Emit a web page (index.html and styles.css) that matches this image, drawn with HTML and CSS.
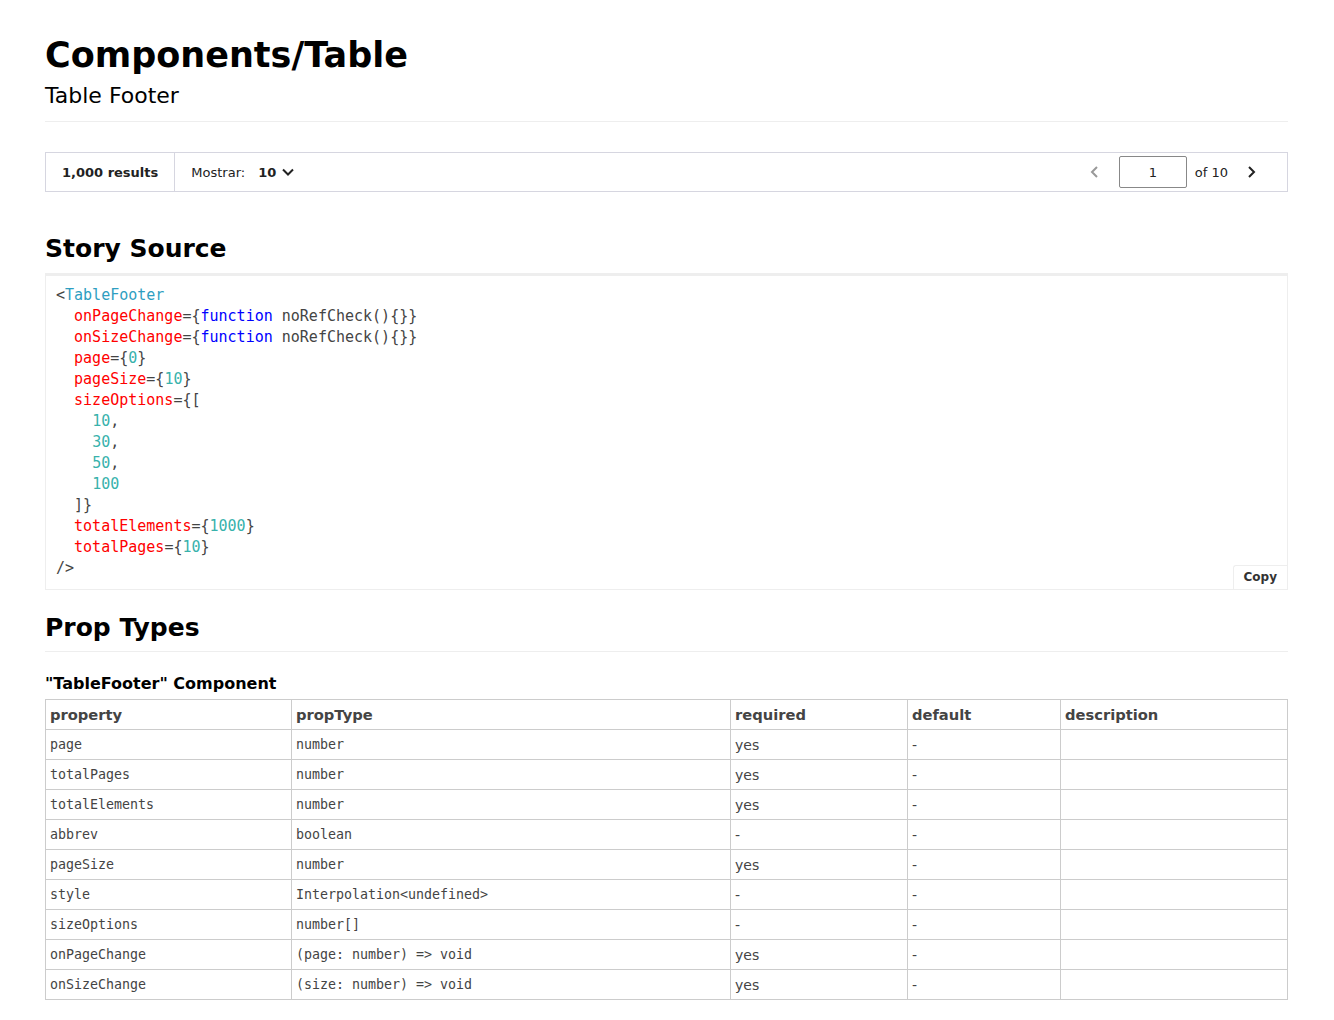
FILE: index.html
```html
<!DOCTYPE html>
<html>
<head>
<meta charset="utf-8">
<link rel="stylesheet" href="styles.css">
</head>
<body>
<div class="page">
  <header class="head">
    <h1 class="title">Components/Table</h1>
    <div class="subtitle">Table Footer</div>
  </header>

  <div class="footer-bar">
    <div class="results">1,000 results</div>
    <div class="size">
      <span class="size-label">Mostrar:</span>
      <span class="size-value">10</span>
      <svg class="chev-down" width="14" height="14" viewBox="0 0 14 14"><path d="M2 4.5 L7 9.5 L12 4.5" fill="none" stroke="#222" stroke-width="2"/></svg>
    </div>
    <div class="pager">
      <svg class="chev prev" width="14" height="14" viewBox="0 0 14 14"><path d="M9 2 L4 7 L9 12" fill="none" stroke="#999" stroke-width="2"/></svg>
      <div class="page-input">1</div>
      <span class="of">of 10</span>
      <svg class="chev next" width="14" height="14" viewBox="0 0 14 14"><path d="M5 2 L10 7 L5 12" fill="none" stroke="#222" stroke-width="2"/></svg>
    </div>
  </div>

  <h2 class="section">Story Source</h2>
  <div class="source">
<pre class="code"><span class="p">&lt;</span><span class="tag">TableFooter</span>
  <span class="attr">onPageChange</span><span class="p">={</span><span class="kw">function</span> <span class="p">noRefCheck(){}}</span>
  <span class="attr">onSizeChange</span><span class="p">={</span><span class="kw">function</span> <span class="p">noRefCheck(){}}</span>
  <span class="attr">page</span><span class="p">={</span><span class="num">0</span><span class="p">}</span>
  <span class="attr">pageSize</span><span class="p">={</span><span class="num">10</span><span class="p">}</span>
  <span class="attr">sizeOptions</span><span class="p">={[</span>
    <span class="num">10</span><span class="p">,</span>
    <span class="num">30</span><span class="p">,</span>
    <span class="num">50</span><span class="p">,</span>
    <span class="num">100</span>
  <span class="p">]}</span>
  <span class="attr">totalElements</span><span class="p">={</span><span class="num">1000</span><span class="p">}</span>
  <span class="attr">totalPages</span><span class="p">={</span><span class="num">10</span><span class="p">}</span>
<span class="p">/&gt;</span></pre>
    <button class="copy">Copy</button>
  </div>

  <h2 class="section section-rule">Prop Types</h2>
  <h3 class="comp">"TableFooter" Component</h3>
  <table class="props">
    <thead>
      <tr><th class="c1">property</th><th class="c2">propType</th><th class="c3">required</th><th class="c4">default</th><th class="c5">description</th></tr>
    </thead>
    <tbody>
      <tr><td class="mono">page</td><td class="mono">number</td><td>yes</td><td>-</td><td></td></tr>
      <tr><td class="mono">totalPages</td><td class="mono">number</td><td>yes</td><td>-</td><td></td></tr>
      <tr><td class="mono">totalElements</td><td class="mono">number</td><td>yes</td><td>-</td><td></td></tr>
      <tr><td class="mono">abbrev</td><td class="mono">boolean</td><td>-</td><td>-</td><td></td></tr>
      <tr><td class="mono">pageSize</td><td class="mono">number</td><td>yes</td><td>-</td><td></td></tr>
      <tr><td class="mono">style</td><td class="mono">Interpolation&lt;undefined&gt;</td><td>-</td><td>-</td><td></td></tr>
      <tr><td class="mono">sizeOptions</td><td class="mono">number[]</td><td>-</td><td>-</td><td></td></tr>
      <tr><td class="mono">onPageChange</td><td class="mono">(page: number) =&gt; void</td><td>yes</td><td>-</td><td></td></tr>
      <tr><td class="mono">onSizeChange</td><td class="mono">(size: number) =&gt; void</td><td>yes</td><td>-</td><td></td></tr>
    </tbody>
  </table>
</div>
</body>
</html>
```

FILE: styles.css
```css
html, body {
  margin: 0;
  padding: 0;
  background: #fff;
}
body {
  font-family: "DejaVu Sans", sans-serif;
  color: #000;
}
.page {
  padding: 35px 46px 20px 45px;
}
.head {
  border-bottom: 1px solid #eee;
  padding-bottom: 10px;
}
.title {
  margin: 0;
  font-size: 35px;
  line-height: 41px;
  font-weight: bold;
}
.subtitle {
  font-size: 22px;
  line-height: 30px;
  margin-top: 5px;
}
.footer-bar {
  margin-top: 30px;
  height: 38px;
  border: 1px solid #d6d6e0;
  display: flex;
  align-items: center;
  font-size: 13px;
  color: #222;
}
.results {
  font-weight: bold;
  padding: 0 16px;
  height: 100%;
  display: flex;
  align-items: center;
  border-right: 1px solid #d6d6e0;
}
.size {
  display: flex;
  align-items: center;
  padding-left: 16px;
}
.size-label {
  margin-right: 13px;
}
.size-value {
  font-weight: bold;
  margin-right: 5px;
}
.pager {
  margin-left: auto;
  display: flex;
  align-items: center;
  padding-right: 29px;
}
.chev.prev {
  margin-right: 17px;
}
.page-input {
  width: 66px;
  height: 30px;
  border: 1px solid #888;
  border-radius: 2px;
  display: flex;
  align-items: center;
  justify-content: center;
}
.of {
  margin-left: 8px;
  margin-right: 16px;
}
.section {
  margin: 42px 0 9px;
  font-size: 25px;
  line-height: 30px;
  font-weight: bold;
}
.source {
  position: relative;
  border: 1px solid #eee;
  border-top: 3px solid #eee;
  padding: 9px 10px 10px 10px;
}
.code {
  margin: 0;
  font-family: "DejaVu Sans Mono", monospace;
  font-size: 15px;
  line-height: 21px;
  color: #444;
}
.code .tag { color: #2e9ec1; }
.code .attr { color: #f00; }
.code .kw { color: #00f; }
.code .num { color: #38b2ac; }
.code .p { color: #444; }
.copy {
  position: absolute;
  right: 0;
  bottom: 0;
  background: #fff;
  border: 1px solid #eee;
  border-right: none;
  border-bottom: none;
  border-top-left-radius: 3px;
  font-family: "DejaVu Sans", sans-serif;
  font-size: 12px;
  font-weight: bold;
  color: #333;
  padding: 4px 10px 5px;
}
.section-rule {
  margin-top: 23px;
  padding-bottom: 8px;
  border-bottom: 1px solid #eee;
  margin-bottom: 0;
}
.comp {
  margin: 22px 0 5px;
  font-size: 16px;
  line-height: 20px;
  font-weight: bold;
}
.props {
  width: 100%;
  border-collapse: collapse;
  font-size: 15px;
  color: #444;
}
.props th, .props td {
  border: 1px solid #ccc;
  height: 29px;
  padding: 0 4px;
  text-align: left;
  vertical-align: middle;
}
.props th {
  font-weight: bold;
  font-size: 14.7px;
}
.props td {
  font-size: 14px;
}
.props td.mono {
  font-family: "DejaVu Sans Mono", monospace;
  font-size: 13.3px;
}
.c1 { width: 237px; }
.c2 { width: 430px; }
.c3 { width: 168px; }
.c4 { width: 144px; }
```
